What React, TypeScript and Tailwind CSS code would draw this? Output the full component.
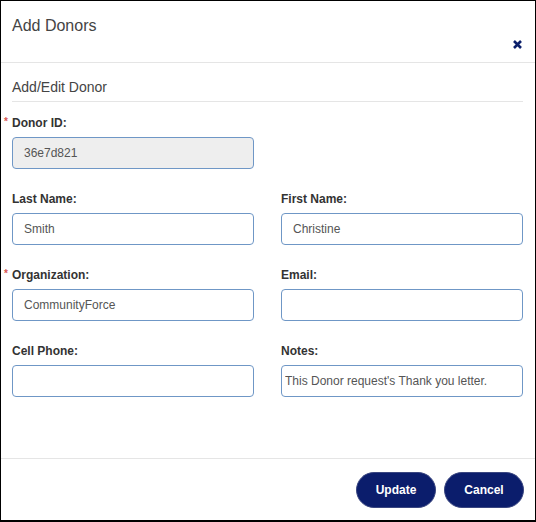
const font = { fontFamily: '"Liberation Sans", Arial, sans-serif' };

type Field = {
  label: string;
  value: string;
  required?: boolean;
  disabled?: boolean;
  tight?: boolean;
};

const fields: (Field | null)[] = [
  { label: "Donor ID:", value: "36e7d821", required: true, disabled: true },
  null,
  { label: "Last Name:", value: "Smith" },
  { label: "First Name:", value: "Christine" },
  { label: "Organization:", value: "CommunityForce", required: true },
  { label: "Email:", value: "" },
  { label: "Cell Phone:", value: "" },
  { label: "Notes:", value: "This Donor request's Thank you letter.", tight: true }
];

const FormField = ({ field }: { field: Field }) => (
  <div>
    <label className="relative mb-[4px] block h-[20px] text-[12px] font-bold leading-[20px] text-[#333]">
      {field.required && (
        <span className="absolute -left-[8px] -top-[1px] text-[10px] text-[#d9534f]">*</span>
      )}
      {field.label}
    </label>
    <input
      readOnly
      value={field.value}
      className={`block h-[32px] w-full rounded-[4px] border border-[#6f97c6] pr-[12px] text-[12px] text-[#555] outline-none ${
        field.disabled ? "bg-[#eeeeee]" : "bg-white"
      } ${field.tight ? "pl-[3px]" : "pl-[11px]"}`}
      style={font}
    />
  </div>
);

export default function App() {
  return (
    <div
      className="flex h-[522px] w-[536px] flex-col border border-b-2 border-black bg-white"
      style={font}
    >
      <div className="flex h-[62px] shrink-0 justify-between border-b border-[#e5e5e5] pl-[11px] pr-[13px]">
        <h4 className="pt-[14px] text-[16px] leading-[22px] text-[#444]">Add Donors</h4>
        <button className="mt-[39px] h-[9px] w-[9px]" aria-label="Close">
          <svg viewBox="0 0 9 9" width="9" height="9">
            <path d="M1 1L8 8M8 1L1 8" stroke="#0b1f6b" strokeWidth="2.6" strokeLinecap="butt" />
          </svg>
        </button>
      </div>

      <div className="flex-1 pl-[11px] pr-[12px] pt-[14px]">
        <div className="border-b border-[#e5e5e5] pb-[4px] text-[14px] leading-[20px] text-[#444]">
          Add/Edit Donor
        </div>
        <div className="mt-[11px] grid grid-cols-2 gap-x-[27px] gap-y-[20px]">
          {fields.map((field, i) =>
            field ? <FormField key={field.label} field={field} /> : <div key={i} />
          )}
        </div>
      </div>

      <div className="flex h-[62px] shrink-0 items-center justify-end gap-[8px] border-t border-[#e5e5e5] pr-[11px]">
        <button className="h-[36px] w-[80px] rounded-full border border-[#3a4680] bg-[#0b1d6c] text-[12px] font-bold text-white">
          Update
        </button>
        <button className="h-[36px] w-[80px] rounded-full border border-[#3a4680] bg-[#0b1d6c] text-[12px] font-bold text-white">
          Cancel
        </button>
      </div>
    </div>
  );
}
